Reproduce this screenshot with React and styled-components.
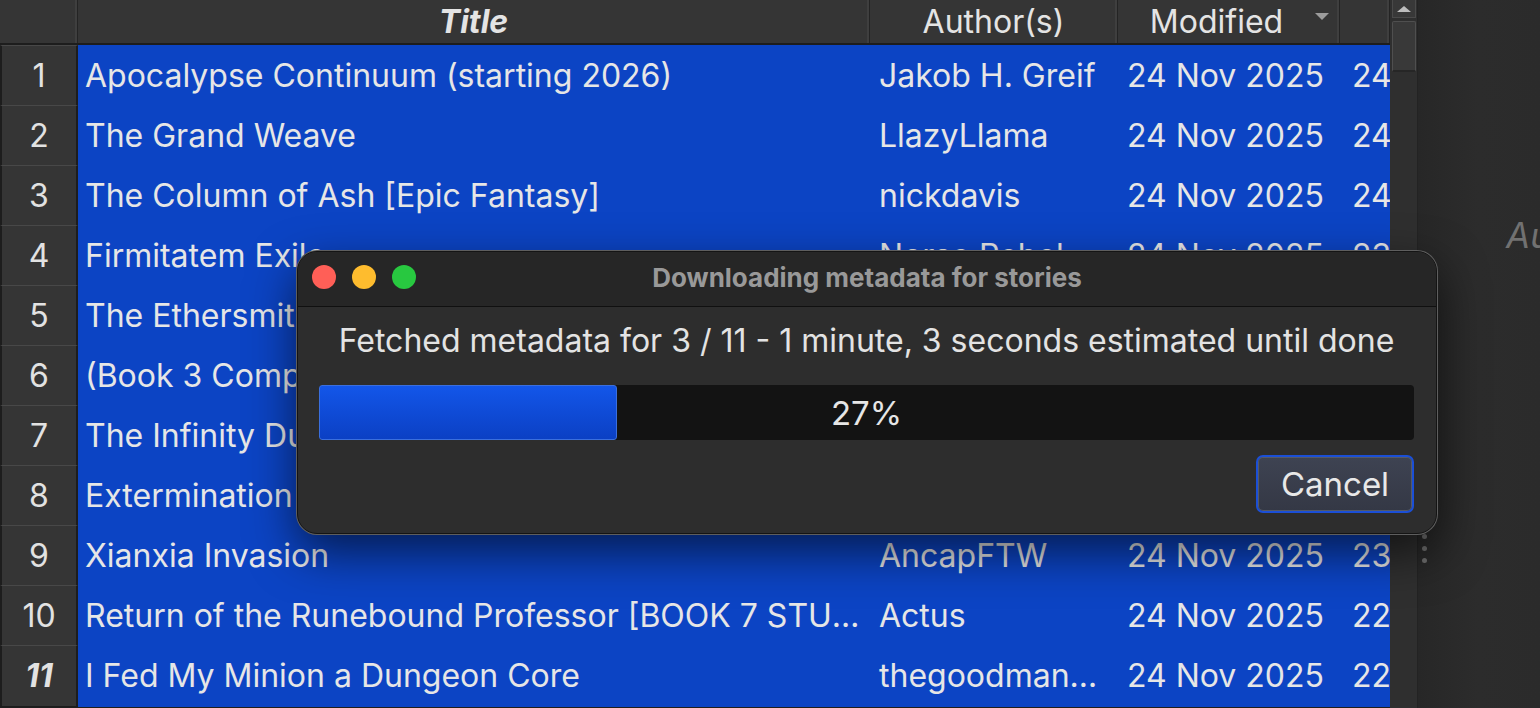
import React from 'react';
import styled, { createGlobalStyle } from 'styled-components';

const GlobalStyle = createGlobalStyle`
  html, body {
    margin: 0;
    padding: 0;
    background: #2b2b2b;
  }
  body {
    font-family: Inter, "Noto Sans", "Liberation Sans", sans-serif;
  }
`;

const COLS = '78px 792px 248px 222px 50px';

const Screen = styled.div`
  position: relative;
  width: 1540px;
  height: 708px;
  display: flex;
  overflow: hidden;
  background: #2b2b2b;
`;

const TablePane = styled.div`
  width: 1390px;
  flex: none;
  display: flex;
  flex-direction: column;
  background: #1e1e1e;
`;

const HeaderRow = styled.div`
  display: grid;
  grid-template-columns: ${COLS};
  height: 43px;
  background: #353535;
  border-bottom: 2px solid #1d1d1d;
`;

const HeaderCell = styled.div`
  display: flex;
  align-items: center;
  justify-content: center;
  padding: 0 ${p => (p.$sorted ? '10px' : '0')} 0 0;
  font-size: 32px;
  color: #e4e4e4;
  font-weight: ${p => (p.$bold ? 700 : 400)};
  font-style: ${p => (p.$bold ? 'italic' : 'normal')};
  border-right: 1px solid #242424;
  box-shadow: inset -2px 0 0 #3f3f3f;
  white-space: nowrap;
  overflow: hidden;
`;

const HeaderLabel = styled.span`
  flex: 1;
  text-align: center;
`;

const SortArrow = styled.span`
  align-self: flex-start;
  margin-top: 13px;
  width: 0;
  height: 0;
  border-left: 7px solid transparent;
  border-right: 7px solid transparent;
  border-top: 7px solid #9c9c9c;
`;

const Row = styled.div`
  display: grid;
  grid-template-columns: ${COLS};
  height: 60px;
  flex: none;
`;

const NumCell = styled.div`
  background: #353535;
  border-top: 1px solid #484848;
  border-bottom: 1px solid #1c1c1c;
  border-left: 2px solid #1d1d1d;
  border-right: 2px solid #1d1d1d;
  text-align: center;
  line-height: 60px;
  font-size: 32px;
  color: #e2e2e2;
  font-weight: ${p => (p.$current ? 700 : 400)};
  font-style: ${p => (p.$current ? 'italic' : 'normal')};
`;

const Cell = styled.div`
  background: #0c44c4;
  padding: 0 ${p => p.$pr ?? 4}px 0 ${p => p.$pl ?? 9}px;
  line-height: 62px;
  font-size: 32px;
  color: #e6e6e6;
  white-space: nowrap;
  overflow: hidden;
  text-overflow: ${p => (p.$clip ? 'clip' : 'ellipsis')};
`;

const ScrollTrack = styled.div`
  width: 27px;
  flex: none;
  display: flex;
  flex-direction: column;
  align-items: center;
  background: #2f2f2f;
  border-right: 1px solid #232323;
`;

const ArrowButton = styled.div`
  width: 24px;
  height: 18px;
  box-sizing: border-box;
  background: #383838;
  border: 1px solid #4a4a4a;
  border-top: none;
  display: flex;
  align-items: center;
  justify-content: center;
`;

const UpTriangle = styled.span`
  width: 0;
  height: 0;
  border-left: 7px solid transparent;
  border-right: 7px solid transparent;
  border-bottom: 6px solid #bdbdbd;
`;

const Thumb = styled.div`
  margin-top: 3px;
  width: 24px;
  height: 51px;
  box-sizing: border-box;
  background: #393939;
  border: 1px solid #4f4f4f;
  border-radius: 2px;
  border-bottom: 2px solid #262626;
`;

const SidePanel = styled.div`
  flex: 1;
  display: flex;
  background: linear-gradient(to right, #272727 0px, #2c2c2c 60px, #2b2b2b 100%);
  overflow: hidden;
`;

const SplitHandle = styled.div`
  width: 12px;
  flex: none;
  display: flex;
  flex-direction: column;
  align-items: center;
  gap: 7px;
  padding-top: 534px;
`;

const Dot = styled.span`
  width: 5px;
  height: 5px;
  border-radius: 50%;
  background: #6c6c6c;
`;

const SideLabel = styled.div`
  padding: 214px 0 0 76px;
  font-size: 35px;
  font-style: italic;
  color: #717171;
  white-space: nowrap;
`;

const Dialog = styled.div`
  position: absolute;
  left: 297px;
  top: 251px;
  width: 1140px;
  height: 283px;
  box-sizing: border-box;
  border-radius: 20px;
  background: #2d2d2d;
  border: 1px solid #141414;
  box-shadow: 0 0 0 1px #5e5e5e, 0 18px 48px rgba(0, 0, 0, 0.6);
  overflow: hidden;
  display: flex;
  flex-direction: column;
`;

const TitleBar = styled.div`
  position: relative;
  height: 54px;
  flex: none;
  background: #262626;
  border-bottom: 1px solid #101010;
  display: flex;
  align-items: center;
  justify-content: center;
`;

const Lights = styled.div`
  position: absolute;
  left: 14px;
  top: 13px;
  display: flex;
  gap: 16px;
`;

const Light = styled.span`
  width: 24px;
  height: 24px;
  border-radius: 50%;
  background: ${p => p.$color};
`;

const TitleText = styled.div`
  font-size: 26px;
  font-weight: 700;
  color: #999999;
  margin-top: -3px;
`;

const DialogBody = styled.div`
  flex: 1;
  display: flex;
  flex-direction: column;
  padding: 0 22px 0 21px;
`;

const Message = styled.div`
  margin-top: 15px;
  text-align: center;
  font-size: 32px;
  line-height: 38px;
  color: #e3e3e3;
  white-space: nowrap;
`;

const Progress = styled.div`
  position: relative;
  margin-top: 25px;
  height: 55px;
  border-radius: 4px;
  background: #131313;
  display: flex;
  align-items: stretch;
`;

const ProgressFill = styled.div`
  box-sizing: border-box;
  border: 1px solid #3b6fdd;
  border-radius: 3px;
  background: linear-gradient(to bottom, #1356e9, #0b40c4);
`;

const ProgressText = styled.span`
  position: absolute;
  inset: 0;
  display: flex;
  align-items: center;
  justify-content: center;
  font-size: 33px;
  color: #e6e6e6;
`;

const ButtonRow = styled.div`
  display: flex;
  justify-content: flex-end;
  margin-top: 15px;
`;

const CancelButton = styled.button`
  width: 158px;
  height: 58px;
  box-sizing: border-box;
  border: 2px solid #1b4fd6;
  border-radius: 7px;
  background: linear-gradient(to bottom, #3e4352, #343845);
  box-shadow: inset 0 0 0 1px #555a66;
  font-family: inherit;
  font-size: 33px;
  color: #e8e8e8;
  padding: 0;
`;

const stories = [
  ['Apocalypse Continuum (starting 2026)', 'Jakob H. Greif', '24 Nov 2025', '24'],
  ['The Grand Weave', 'LlazyLlama', '24 Nov 2025', '24'],
  ['The Column of Ash [Epic Fantasy]', 'nickdavis', '24 Nov 2025', '24'],
  ['Firmitatem Exile', 'Norse Rebel', '24 Nov 2025', '23'],
  ['The Ethersmith', 'Sethro', '24 Nov 2025', '23'],
  ['(Book 3 Complete) Rise', 'Kairos', '24 Nov 2025', '23'],
  ['The Infinity Dungeon', 'Lirion', '24 Nov 2025', '23'],
  ['Extermination', 'Cthulhu', '24 Nov 2025', '23'],
  ['Xianxia Invasion', 'AncapFTW', '24 Nov 2025', '23'],
  ['Return of the Runebound Professor [BOOK 7 STUDENTS ARRIVE]', 'Actus', '24 Nov 2025', '22'],
  ['I Fed My Minion a Dungeon Core', 'thegoodmanwrites', '24 Nov 2025', '22'],
];

const done = 3;
const total = 11;
const pct = Math.round((done / total) * 100);

export default function App() {
  return (
    <Screen>
      <GlobalStyle />
      <TablePane>
        <HeaderRow>
          <HeaderCell />
          <HeaderCell $bold>Title</HeaderCell>
          <HeaderCell>Author(s)</HeaderCell>
          <HeaderCell $sorted>
            <HeaderLabel>Modified</HeaderLabel>
            <SortArrow />
          </HeaderCell>
          <HeaderCell />
        </HeaderRow>
        {stories.map(([title, author, modified, extra], i) => (
          <Row key={i}>
            <NumCell $current={i === stories.length - 1}>{i + 1}</NumCell>
            <Cell $pl={7}>{title}</Cell>
            <Cell $pl={9} $pr={14}>{author}</Cell>
            <Cell $pl={9}>{modified}</Cell>
            <Cell $pl={12} $pr={0} $clip>{extra}</Cell>
          </Row>
        ))}
      </TablePane>
      <ScrollTrack>
        <ArrowButton><UpTriangle /></ArrowButton>
        <Thumb />
      </ScrollTrack>
      <SidePanel>
        <SplitHandle>
          <Dot /><Dot /><Dot />
        </SplitHandle>
        <SideLabel>Au</SideLabel>
      </SidePanel>

      <Dialog>
        <TitleBar>
          <Lights>
            <Light $color="#ff5f57" />
            <Light $color="#febc2e" />
            <Light $color="#28c840" />
          </Lights>
          <TitleText>Downloading metadata for stories</TitleText>
        </TitleBar>
        <DialogBody>
          <Message>
            Fetched metadata for {done} / {total} - 1 minute, 3 seconds estimated until done
          </Message>
          <Progress>
            <ProgressFill style={{ width: `${Math.floor((done / total) * 1000) / 10}%` }} />
            <ProgressText>{pct}%</ProgressText>
          </Progress>
          <ButtonRow>
            <CancelButton>Cancel</CancelButton>
          </ButtonRow>
        </DialogBody>
      </Dialog>
    </Screen>
  );
}
